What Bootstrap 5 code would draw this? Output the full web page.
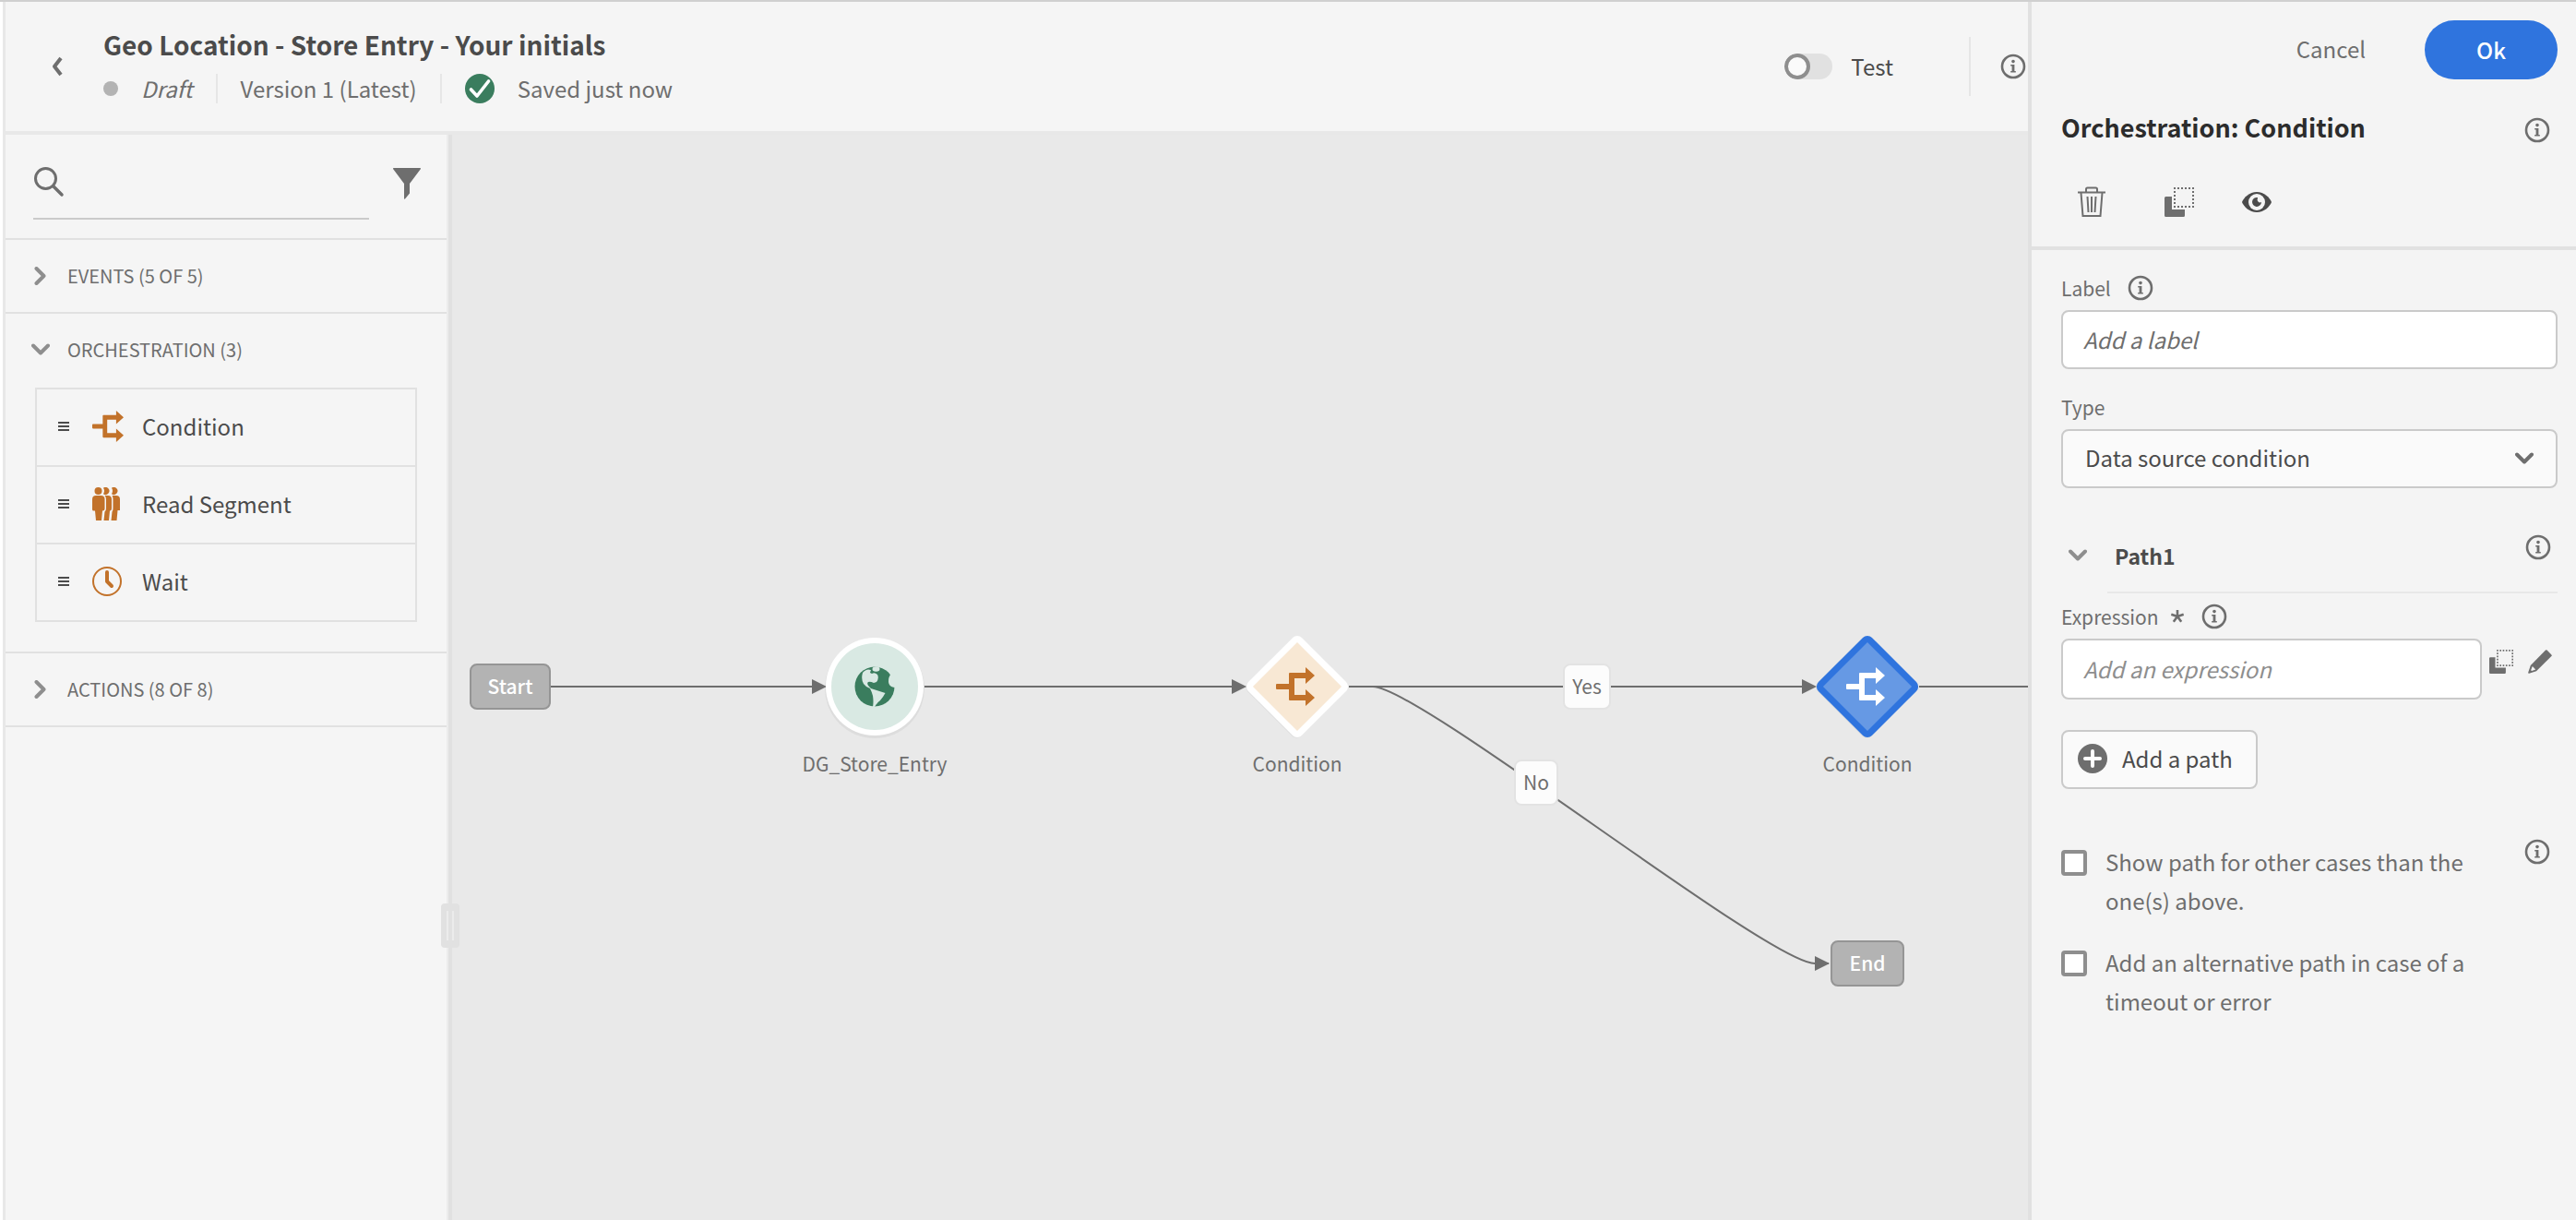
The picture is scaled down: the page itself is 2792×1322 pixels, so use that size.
<!DOCTYPE html>
<html lang="en">
<head>
<meta charset="utf-8">
<meta name="viewport" content="width=device-width, initial-scale=1">
<title>Geo Location - Store Entry - Your initials</title>
<link href="https://cdn.jsdelivr.net/npm/bootstrap@5.3.0/dist/css/bootstrap.min.css" rel="stylesheet">
<style>
:root { --ink: #4b4b4b; --ink-dark: #2c2c2c; --ink-soft: #6e6e6e; --ink-pale: #8e8e8e; --rule: #e1e1e1; --rule-strong: #cacaca; --panel: #f5f5f5; --canvas: #e9e9e9; --accent: #2f74de; --orange: #c2722a; --green: #3a7d5e; }
body { font-family: "Noto Sans CJK SC", "Noto Sans", sans-serif; font-size: 24px; line-height: 42px; color: var(--ink-soft); background: #fff; }
svg { display: block; flex: none; }
button { line-height: inherit; }
.app-shell { border-top: 2px solid #d0d0d0; padding-left: 3px; }
.workspace { border-left: 3px solid #e8e8e8; background: var(--panel); }
.topbar { height: 144px; border-bottom: 4px solid #e8e8e8; padding-left: 36px; padding-right: 2px; }
.plain-btn { border: 0; background: none; padding: 0; color: inherit; }
.back-btn { width: 70px; padding-left: 13px; color: var(--ink-soft); }
.journey-title { font-size: 28px; line-height: 48px; font-weight: 700; color: var(--ink); margin: 0; }
.meta-row { line-height: 48px; gap: 25px; }
.meta-dot { width: 16px; height: 16px; border-radius: 50%; background: #b3b3b3; }
.vbar { width: 2px; height: 32px; background: #e6e6e6; }
.vbar-tall { height: 64px; margin: 0 32px 0 82px; }
.test-switch { gap: 20px; color: var(--ink); }
.switch-input.form-check-input { width: 52px; height: 28px; margin: 0; border: 0; background-color: #e1e1e1; background-size: 28px 28px; background-position: left center; float: none;
  background-image: url("data:image/svg+xml,%3csvg xmlns='http://www.w3.org/2000/svg' viewBox='0 0 28 28'%3e%3ccircle cx='14' cy='14' r='12' fill='%23fafafa' stroke='%238e8e8e' stroke-width='4'/%3e%3c/svg%3e"); }
.palette { width: 484px; border-right: 4px solid var(--rule); position: relative; z-index: 2; }
.palette-inner { border-right: 2px solid #ececec; height: 100%; }
.search-area { padding: 24px 28px 20px 30px; border-bottom: 2px solid var(--rule); height: 114px; }
.search-box { border-bottom: 2px solid var(--rule-strong); width: 364px; height: 68px; padding-bottom: 12px; }
.search-box input { border: 0; background: none; width: 100%; outline: 0; }
.section-head { height: 78px; padding-left: 26px; font-size: 20px; color: var(--ink-soft); text-align: left; width: 100%; }
.section-head .chev { width: 24px; margin-right: 17px; color: var(--ink-pale); }
.palette-section { border-bottom: 2px solid var(--rule); }
.block-list { margin: 2px 32px 32px; border: 2px solid var(--rule); color: var(--ink); }
.block-item { height: 84px; padding: 0 0 2px 23px; border-bottom: 2px solid var(--rule); }
.block-item:last-child { height: 82px; border-bottom: 0; }
.block-item .kind { width: 34px; margin: 0 20px 0 25px; color: var(--orange); }
.drag-handle { position: absolute; left: 472px; top: 833px; width: 20px; height: 48px; border-radius: 4px; background: var(--rule); }
.drag-handle i { width: 2px; height: 32px; background: #ececec; }
.flow-canvas { background: var(--canvas); position: relative; overflow: hidden; font-size: 21px; line-height: 32px; }
.node, .edge-tag, .terminal { position: absolute; transform: translate(-50%, -50%); }
.terminal, .edge-tag { height: 50px; padding-bottom: 2px; border-radius: 8px; }
.terminal { border: 2px solid #959595; background: #b3b3b3; color: #fff; font-weight: 500; }
.edge-tag { background: #fcfcfc; border: 2px solid #e3e3e3; }
.node-caption { position: absolute; top: 100%; left: 50%; transform: translateX(-50%); margin-top: 9px; white-space: nowrap; }
.at-start { left: 63px; top: 598px; width: 88px; }
.at-entry { left: 458px; top: 598px; }
.at-first { left: 916px; top: 598px; }
.at-second { left: 1534px; top: 598px; }
.at-end { left: 1534px; top: 898px; width: 80px; }
.at-yes { left: 1230px; top: 598px; width: 52px; }
.at-no { left: 1175px; top: 702px; width: 48px; }
.inspector { width: 594px; border-left: 4px solid var(--rule); background: #f4f4f4; }
.inspector-top { border-bottom: 4px solid var(--rule); padding: 20px 20px 31px 32px; }
.cancel-btn { margin-right: 64px; padding-bottom: 2px; }
.ok-btn { width: 144px; height: 64px; border-radius: 32px; background: var(--accent); border: 0; color: #fff; font-weight: 500; padding-bottom: 2px; }
.title-row { margin-top: 31px; }
.inspector-title { font-size: 27px; line-height: 42px; font-weight: 700; color: var(--ink-dark); margin: 0; padding-bottom: 6px; }
.tool-row { gap: 52px; margin-top: 37px; padding-left: 16px; }
.delete-btn { margin-right: 10px; }
.inspector-body { padding: 20px 20px 0 32px; }
.label-row { gap: 18px; margin-bottom: 3px; }
.field-label { font-size: 21px; line-height: 42px; }
.type-label { margin: 20px 0 3px; }
.text-field.form-control, .text-field.form-select { height: 64px; font-size: 24px; border: 2px solid var(--rule-strong); border-radius: 8px; padding: 0 22px 2px; color: var(--ink); background-color: #fff; }
.text-field.form-select { background-color: #fafafa; padding-left: 24px; background-position: right 24px center; background-size: 20px 14px;
  background-image: url("data:image/svg+xml,%3csvg xmlns='http://www.w3.org/2000/svg' viewBox='0 0 20 14'%3e%3cpath d='M2 2.5l8 8 8-8' fill='none' stroke='%236e6e6e' stroke-width='4' stroke-linecap='round' stroke-linejoin='round'/%3e%3c/svg%3e"); }
.text-field::placeholder { color: var(--ink-soft); font-style: italic; opacity: 1; }
.expr-field::placeholder { color: var(--ink-pale); }
.expr-field.form-control { height: 66px; width: 456px; }
.path-head { height: 62px; margin-top: 50px; padding: 0 7px 16px 8px; }
.path-name { font-size: 23px; color: var(--ink); margin-left: 30px; }
.path-rule { border: 0; border-top: 2px solid #e8e8e8; opacity: 1; margin: 0 0 0 50px; }
.add-path { height: 64px; border: 2px solid var(--rule-strong); border-radius: 8px; background: #fafafa; color: var(--ink); padding: 0 25px 2px 16px; margin-top: 33px; gap: 16px; }
.check-group { padding-top: 54px; gap: 21px; }
.check-row { gap: 20px; }
.check-row label { width: 405px; margin-top: 4px; }
.check-row .form-check-input { width: 28px; height: 28px; margin: 12px 0 0; border: 4px solid var(--ink-pale); border-radius: 4px; background-color: #fff; flex: none; }
</style>
<script src="https://cdn.jsdelivr.net/npm/bootstrap@5.3.0/dist/js/bootstrap.bundle.min.js"></script>
</head>
<body>
<svg width="0" height="0" class="position-absolute" aria-hidden="true">
  <symbol id="i-info" viewBox="0 0 28 28"><circle cx="14" cy="14" r="12" fill="none" stroke="currentColor" stroke-width="2.6"/><circle cx="14" cy="8.6" r="1.8" fill="currentColor"/><path d="M11.2 12h4.200v7h1.400v1.600h-5.600V19h1.400v-5.400h-1.400z" fill="currentColor"/></symbol>
  <symbol id="i-down" viewBox="0 0 20 14"><path d="M2 2.500l8 8 8-8" fill="none" stroke="currentColor" stroke-width="4" stroke-linecap="round" stroke-linejoin="round"/></symbol>
  <symbol id="i-right" viewBox="0 0 14 20"><path d="M2.500 2l8 8-8 8" fill="none" stroke="currentColor" stroke-width="4" stroke-linecap="round" stroke-linejoin="round"/></symbol>
  <symbol id="i-grip" viewBox="0 0 12 12"><path d="M0 2h12M0 6h12M0 10h12" stroke="currentColor" stroke-width="2"/></symbol>
  <symbol id="i-branch" viewBox="0 0 42 42"><path d="M1 18h13V7a1 1 0 0 1 1-1h17V0l10 9-10 9v-6H20v18h12v-6l10 9-10 9v-6H15a1 1 0 0 1-1-1V24H1a1 1 0 0 1-1-1v-4a1 1 0 0 1 1-1z" fill="currentColor"/></symbol>
  <symbol id="i-copy" viewBox="0 0 32 32"><path d="M0 11.500A1.500 1.500 0 0 1 1.500 10H8v14h14v6.500a1.500 1.500 0 0 1-1.500 1.500h-19A1.500 1.500 0 0 1 0 30.500z" fill="currentColor"/><path d="M10 1h22M10 21h22M11 4v16M31 4v16" fill="none" stroke="currentColor" stroke-width="2" stroke-dasharray="2 2"/></symbol>
</svg>

<div class="app-shell d-flex min-vh-100">
  <div class="workspace d-flex flex-column flex-grow-1 overflow-hidden">
    <header class="topbar d-flex align-items-center">
      <button class="plain-btn back-btn" type="button" aria-label="Back"><svg width="14" height="22" viewBox="0 0 14 22"><path d="M11 2L4 11l7 9" fill="none" stroke="currentColor" stroke-width="4" stroke-linejoin="round"/></svg></button>
      <div>
        <h1 class="journey-title">Geo Location - Store Entry - Your initials</h1>
        <div class="meta-row d-flex align-items-center">
          <span class="meta-dot"></span><em>Draft</em><span class="vbar"></span><span>Version 1 (Latest)</span><span class="vbar"></span>
          <svg width="32" height="32" viewBox="0 0 32 32"><circle cx="16" cy="16" r="16" fill="#3a7d5e"/><path d="M6.500 17l6.500 7L25.500 8" fill="none" stroke="#fff" stroke-width="3.600" stroke-linecap="round" stroke-linejoin="round"/></svg>
          <span>Saved just now</span>
        </div>
      </div>
      <div class="d-flex align-items-center ms-auto">
        <div class="test-switch form-switch p-0 d-flex align-items-center"><input class="form-check-input switch-input" type="checkbox" role="switch" id="testMode"><label for="testMode">Test</label></div>
        <span class="vbar vbar-tall"></span>
        <button class="plain-btn" type="button" aria-label="Journey information"><svg width="28" height="28"><use href="#i-info"/></svg></button>
      </div>
    </header>

    <div class="d-flex flex-grow-1">
      <aside class="palette">
        <div class="palette-inner">
          <div class="search-area d-flex justify-content-between">
            <div class="search-box d-flex align-items-center gap-3">
              <svg width="34" height="34" viewBox="0 0 34 34"><circle cx="13.500" cy="13.500" r="11" fill="none" stroke="#6e6e6e" stroke-width="3"/><path d="M21.500 21.500L31 31" stroke="#6e6e6e" stroke-width="3.500" stroke-linecap="round"/></svg>
              <input type="search" aria-label="Search components">
            </div>
            <button class="plain-btn align-self-start mt-2 pt-1" type="button" aria-label="Filter"><svg width="30" height="34" viewBox="0 0 30 34"><path d="M.7 0h28.600c.7 0 .9.700.5 1.300L18 17v10.500L13 33.500c-.5.500-1 .3-1-.4V17L.2 1.300C-.2.700 0 0 .7 0z" fill="#6e6e6e"/></svg></button>
          </div>
          <section class="palette-section">
            <button class="plain-btn section-head d-flex align-items-center" type="button" aria-expanded="false"><span class="chev d-flex justify-content-center"><svg width="14" height="20"><use href="#i-right"/></svg></span>EVENTS (5 OF 5)</button>
          </section>
          <section class="palette-section">
            <button class="plain-btn section-head d-flex align-items-center" type="button" aria-expanded="true"><span class="chev d-flex justify-content-center"><svg width="20" height="14"><use href="#i-down"/></svg></span>ORCHESTRATION (3)</button>
            <ul class="block-list list-unstyled">
              <li class="block-item d-flex align-items-center"><svg width="12" height="12"><use href="#i-grip"/></svg><span class="kind"><svg width="34" height="34"><use href="#i-branch"/></svg></span>Condition</li>
              <li class="block-item d-flex align-items-center"><svg width="12" height="12"><use href="#i-grip"/></svg><span class="kind"><svg width="30" height="36" viewBox="0 0 30 36" fill="currentColor"><circle cx="6.500" cy="4" r="4"/><path d="M4 9h5.500q4 0 4 4v10q0 2.500-2.500 2.500L10 36H4L3 25.500H1.500Q0 25.500 0 24V13q0-4 4-4z"/><path d="M12 .8a4 4 0 1 1 0 6.400q2-3.200 0-6.400zM13.500 9h3.500q4 0 4 4v10q0 2.500-2 2.500L18 36h-5.500l1-9.500q1.500-1 1.500-3.500V13q0-2.500-1.500-4z"/><path d="M21 .8a4 4 0 1 1 0 6.400q2-3.200 0-6.400zM22 9h4q4 0 4 4v12h-2.500l-1 11H20.500l1-9.500q1-1 1-3.500V13q0-2.500-1-4z"/></svg></span>Read Segment</li>
              <li class="block-item d-flex align-items-center"><svg width="12" height="12"><use href="#i-grip"/></svg><span class="kind"><svg width="32" height="32" viewBox="0 0 32 32" fill="none" stroke="currentColor"><circle cx="16" cy="16" r="15" stroke-width="2"/><path d="M16 6v10l5 5" stroke-width="4" stroke-linecap="round" stroke-linejoin="round"/></svg></span>Wait</li>
            </ul>
          </section>
          <section class="palette-section">
            <button class="plain-btn section-head d-flex align-items-center" type="button" aria-expanded="false"><span class="chev d-flex justify-content-center"><svg width="14" height="20"><use href="#i-right"/></svg></span>ACTIONS (8 OF 8)</button>
          </section>
        </div>
        <div class="drag-handle d-flex align-items-center justify-content-center gap-1"><i></i><i></i></div>
      </aside>

      <main class="flow-canvas flex-grow-1">
        <svg class="position-absolute top-0 start-0" width="100%" height="100%" fill="none" stroke="#6e6e6e" stroke-width="2">
          <path d="M107 598H400M512 598H856M972 598H1474M1590 598H2600M998 598C1048 598 1427 898 1477 898H1492"/>
          <path d="M390 590l16 8-16 8zM845 590l16 8-16 8zM1463 590l16 8-16 8zM1477 890l16 8-16 8z" fill="#6e6e6e" stroke="none"/>
        </svg>
        <div class="terminal at-start d-flex align-items-center justify-content-center">Start</div>
        <div class="node at-entry">
          <svg width="116" height="116" viewBox="-58 -58 116 116"><circle r="54" cy="2" fill="#000" opacity=".05"/><circle r="53" fill="#fff"/><circle r="47" fill="#d9e9e3"/><circle r="21.500" fill="#3a7d5e"/><g fill="#d9e9e3"><path d="M-13-15Q-15-8-12-3Q-9 1-5 2Q-3 6-2 10Q-1 16-2 22H0Q3 17 6 15Q10 10 11.500 7L-1 3Q-4 3-6 0Q-9-3-7-5Q-5-6-1-4L2-5Q5-9 3-13Q0-16-3-14L-5-15L-4-18Q-9-20-13-15z"/><ellipse cx="1.500" cy="-19" rx="4" ry="2.800"/><path d="M14-17L17-13Q14-8 15.500-3Q17 1 23 1L24-12z"/></g></svg>
          <span class="node-caption">DG_Store_Entry</span>
        </div>
        <div class="node at-first">
          <svg width="116" height="116" viewBox="-58 -58 116 116"><rect x="-41" y="-40" width="82" height="82" rx="7" transform="rotate(45)" fill="#000" opacity=".04"/><rect x="-41" y="-41" width="82" height="82" rx="7" transform="rotate(45)" fill="#fff"/><rect x="-34" y="-34" width="68" height="68" transform="rotate(45)" fill="#f8e8d4"/><use href="#i-branch" x="-23" y="-21" width="42" height="42" color="#c2722a"/></svg>
          <span class="node-caption">Condition</span>
        </div>
        <div class="node at-second">
          <svg width="116" height="116" viewBox="-58 -58 116 116"><rect x="-41" y="-40" width="82" height="82" rx="7" transform="rotate(45)" fill="#000" opacity=".04"/><rect x="-41" y="-41" width="82" height="82" rx="7" transform="rotate(45)" fill="#2f74de"/><rect x="-34" y="-34" width="68" height="68" transform="rotate(45)" fill="#6699e4"/><use href="#i-branch" x="-23" y="-21" width="42" height="42" color="#fff"/></svg>
          <span class="node-caption">Condition</span>
        </div>
        <div class="edge-tag at-yes d-flex align-items-center justify-content-center">Yes</div>
        <div class="edge-tag at-no d-flex align-items-center justify-content-center">No</div>
        <div class="terminal at-end d-flex align-items-center justify-content-center">End</div>
      </main>
    </div>
  </div>

  <aside class="inspector flex-shrink-0">
    <div class="inspector-top">
      <div class="d-flex justify-content-end align-items-center">
        <button class="plain-btn cancel-btn" type="button">Cancel</button>
        <button class="ok-btn" type="button">Ok</button>
      </div>
      <div class="title-row d-flex justify-content-between align-items-center pe-2">
        <h2 class="inspector-title">Orchestration: Condition</h2>
        <button class="plain-btn" type="button" aria-label="About conditions"><svg width="28" height="28"><use href="#i-info"/></svg></button>
      </div>
      <div class="tool-row d-flex align-items-center">
        <button class="plain-btn delete-btn" type="button" aria-label="Delete"><svg width="34" height="34" viewBox="0 0 34 34" fill="none" stroke="#6e6e6e" stroke-width="2"><path d="M2 6.500h30M11 6V3q0-1.500 1.500-1.500h9Q23 1.500 23 3v3M5.500 7l2 25h19l2-25M12.500 11l1 17M17 11v17M21.500 11l-1 17"/></svg></button>
        <button class="plain-btn" type="button" aria-label="Copy"><svg width="32" height="32" color="#6e6e6e"><use href="#i-copy"/></svg></button>
        <button class="plain-btn" type="button" aria-label="Preview"><svg width="32" height="24" viewBox="0 0 32 24"><path d="M16 1C8 1 2 7 0 12c2 5 8 11 16 11s14-6 16-11C30 7 24 1 16 1z" fill="#4b4b4b"/><circle cx="16" cy="12" r="9" fill="#f4f4f4"/><path d="M17 7a5 5 0 1 0 4 5q-2 1-3.500-.5T17 7z" fill="#4b4b4b"/></svg></button>
      </div>
    </div>

    <form class="inspector-body">
      <div class="label-row d-flex align-items-center"><label class="field-label" for="nodeLabel">Label</label><svg width="28" height="28"><use href="#i-info"/></svg></div>
      <input class="form-control text-field" id="nodeLabel" type="text" placeholder="Add a label">
      <label class="field-label type-label d-block" for="nodeType">Type</label>
      <select class="form-select text-field" id="nodeType"><option>Data source condition</option></select>

      <div class="path-head d-flex align-items-center">
        <svg width="20" height="14" color="#8e8e8e"><use href="#i-down"/></svg>
        <strong class="path-name">Path1</strong>
        <svg class="ms-auto align-self-start" width="28" height="28"><use href="#i-info"/></svg>
      </div>
      <hr class="path-rule">
      <div class="label-row d-flex align-items-center mt-1"><label class="field-label d-flex align-items-center gap-2" for="expression">Expression <svg class="ms-1" width="16" height="16" viewBox="0 0 16 16" stroke="#6e6e6e" stroke-width="2.600"><path d="M8 8V1M8 8l6.700-2.200M8 8l4.200 5.700M8 8l-4.200 5.700M8 8L1.300 5.800"/></svg></label><svg width="28" height="28"><use href="#i-info"/></svg></div>
      <div class="d-flex">
        <input class="form-control text-field expr-field" id="expression" type="text" placeholder="Add an expression">
        <div class="d-flex align-items-start gap-3 ms-2 mt-2 pt-1">
          <button class="plain-btn" type="button" aria-label="Copy expression"><svg width="26" height="26" color="#6e6e6e"><use href="#i-copy"/></svg></button>
          <button class="plain-btn" type="button" aria-label="Edit expression"><svg width="26" height="26" viewBox="0 0 26 26"><path d="M19 .6q.8-.8 1.600 0l4.800 4.800q.8.800 0 1.600L9 23.200 1.200 25.800q-1.200.200-1-1L2.800 17z" fill="#6e6e6e"/><path d="M4.800 18l3.400 3.500-4.200 1.600-.9-.9z" fill="#f4f4f4"/></svg></button>
        </div>
      </div>
      <button class="add-path d-flex align-items-center" type="button"><svg width="32" height="32" viewBox="0 0 32 32"><circle cx="16" cy="16" r="16" fill="#6e6e6e"/><path d="M16 8v16M8 16h16" stroke="#fff" stroke-width="4" stroke-linecap="round"/></svg>Add a path</button>

      <div class="check-group d-flex flex-column">
        <div class="check-row d-flex"><input class="form-check-input" type="checkbox" id="otherCases"><label for="otherCases">Show path for other cases than the one(s) above.</label><svg class="ms-auto me-2" width="28" height="28"><use href="#i-info"/></svg></div>
        <div class="check-row d-flex"><input class="form-check-input" type="checkbox" id="altPath"><label for="altPath">Add an alternative path in case of a timeout or error</label></div>
      </div>
    </form>
  </aside>
</div>
</body>
</html>
